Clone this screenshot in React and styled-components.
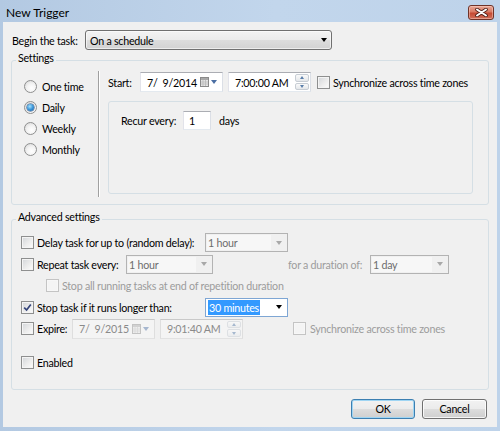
import React from 'react';
import styled, { createGlobalStyle, css } from 'styled-components';

const GlobalStyle = createGlobalStyle`
  html, body {
    margin: 0;
    padding: 0;
    background: #c4d8ee;
  }
  body {
    font-family: Lato, 'Noto Sans', sans-serif;
    font-size: 10.7px;
    letter-spacing: -0.25px;
    color: #000;
  }
  * {
    box-sizing: border-box;
  }
`;

const Window = styled.div`
  display: flex;
  flex-direction: column;
  width: 500px;
  height: 431px;
  background: linear-gradient(to right, #b3c9e2 0%, #c2d6ec 55%, #bed3ea 100%);
`;

const TitleBar = styled.div`
  display: flex;
  justify-content: space-between;
  align-items: flex-start;
  height: 22px;
  padding: 0 6px 0 6px;
`;

const Title = styled.div`
  padding-top: 5px;
  font-size: 12px;
  letter-spacing: 0;
  line-height: 16px;
`;

const CloseButton = styled.div`
  display: flex;
  align-items: center;
  justify-content: center;
  width: 26px;
  height: 15px;
  margin-top: 5px;
  border: 1px solid #6f3328;
  border-radius: 3px;
  background: linear-gradient(#e9a897 0%, #d87a64 45%, #c54a33 55%, #d0705a 100%);
  box-shadow: inset 0 0 0 1px rgba(255, 220, 210, 0.45);
`;

const Client = styled.div`
  display: flex;
  flex: 1;
  flex-direction: column;
  margin: 0 3px 4px;
  padding: 8px 8px 0;
  background: #f0f0f0;
`;

const BeginRow = styled.div`
  display: flex;
  align-items: center;
  height: 20px;
  padding-left: 1px;
`;

const Label = styled.span`
  flex: none;
  width: ${p => (p.$w ? `${p.$w}px` : 'auto')};
  margin-left: ${p => p.$left || 0}px;
  color: ${p => (p.$disabled ? '#9c9c9c' : '#000')};
  white-space: nowrap;
`;

const Group = styled.fieldset`
  min-width: 0;
  margin: ${p => p.$top}px 0 0;
  padding: 0;
  border: 1px solid #d5dfe5;
  border-radius: 3px;
`;

const Legend = styled.legend`
  margin-left: 4px;
  padding: 0 2px 4px;
  line-height: 14px;
`;

const SettingsBody = styled.div`
  display: flex;
  padding: 2px 0 7px;
`;

const Schedules = styled.div`
  display: flex;
  flex: none;
  flex-direction: column;
  width: 86px;
  padding: 5px 0 0 12px;
`;

const Separator = styled.div`
  flex: none;
  width: 2px;
  border-left: 1px solid #a0a0a0;
  border-right: 1px solid #fff;
`;

const ScheduleDetail = styled.div`
  display: flex;
  flex: 1;
  flex-direction: column;
  min-width: 0;
  height: 126px;
  padding: 1px 15px 3px 8px;
`;

const Row = styled.div`
  display: flex;
  align-items: center;
  flex: none;
  height: ${p => p.$h || 20}px;
  margin-top: ${p => p.$top || 0}px;
  padding-left: ${p => p.$indent || 0}px;
`;

const RecurPanel = styled.div`
  height: 93px;
  margin-top: 9px;
  padding: 9px 12px;
  border: 1px solid #d5dfe5;
  border-radius: 3px;
`;

const AdvancedBody = styled.div`
  display: flex;
  flex-direction: column;
  padding: 4px 0 15px 9px;
`;

const RadioCircle = styled.span`
  display: flex;
  align-items: center;
  justify-content: center;
  flex: none;
  width: 13px;
  height: 13px;
  margin-right: 5px;
  border: 1px solid #8e8f8f;
  border-radius: 50%;
  background: radial-gradient(circle at 60% 65%, #fff 0%, #f3f3f3 45%, #d3d3d3 100%);

  &::after {
    content: '';
    display: ${p => (p.$checked ? 'block' : 'none')};
    width: 7px;
    height: 7px;
    border-radius: 50%;
    background: radial-gradient(circle at 40% 35%, #a6e3ff 0%, #3b95d8 50%, #195a9c 100%);
    box-shadow: 0 0 0 0.5px #274c7a;
  }
`;

const Box = styled.span`
  display: flex;
  align-items: center;
  justify-content: center;
  flex: none;
  width: 13px;
  height: 13px;
  margin-right: ${p => p.$gap || 3}px;
  border: 1px solid ${p => (p.$disabled ? '#c4c4c4' : '#8e8f8f')};
  background: ${p =>
    p.$disabled
      ? '#f4f4f4'
      : 'linear-gradient(135deg, #d2d5d9 0%, #ececec 55%, #fdfdfd 100%)'};
  box-shadow: inset 0 0 0 1px ${p => (p.$disabled ? '#f7f7f7' : '#f4f4f4')};
`;

const controlBox = css`
  display: flex;
  align-items: center;
  flex: none;
  width: ${p => p.$w}px;
  height: ${p => p.$h || 19}px;
  margin-left: ${p => p.$left || 0}px;
`;

const DropButton = styled.div`
  ${controlBox};
  justify-content: space-between;
  padding: 0 4px 0 4px;
  border: 1px solid #707070;
  border-radius: 3px;
  background: linear-gradient(#f3f3f3 0%, #ebebeb 50%, #dddddd 51%, #d2d2d2 100%);
  box-shadow: inset 0 0 0 1px rgba(255, 255, 255, 0.6);
`;

const Combo = styled.div`
  ${controlBox};
  padding: 1px;
  border: 1px solid ${p => (p.$focus ? '#7ea6d4' : '#b3b3b3')};
  background: ${p => (p.$focus ? '#fff' : '#f0f0f0')};
`;

const ComboText = styled.span`
  display: flex;
  align-items: center;
  flex: 1;
  height: 100%;
  padding-left: 1px;
  color: ${p => (p.$focus ? '#000' : '#6d6d6d')};
  background: ${p => (p.$focus ? '#fff' : '#f7f7f7')};
  white-space: nowrap;
`;

const Selected = styled.span`
  padding: 0 1px;
  line-height: 15px;
  color: #fff;
  background: #3399ff;
`;

const ArrowCell = styled.span`
  display: flex;
  align-items: center;
  justify-content: center;
  width: 15px;
  height: 100%;
`;

const Arrow = styled.span`
  width: 0;
  height: 0;
  border-left: 3.5px solid transparent;
  border-right: 3.5px solid transparent;
  border-top: 4px solid ${p => p.$color || '#000'};
`;

const Field = styled.div`
  ${controlBox};
  justify-content: space-between;
  padding: 0 1px 0 6px;
  border: 1px solid;
  border-color: ${p =>
    p.$disabled ? '#c9c9c9 #dedede #e2e2e2 #dedede' : '#abadb3 #dbdfe6 #e3e9ef #e2e3ea'};
  background: ${p => (p.$disabled ? '#f4f4f4' : '#fff')};
  color: ${p => (p.$disabled ? '#8a8a8a' : '#000')};
  white-space: pre;
`;

const PickerIcons = styled.span`
  display: flex;
  align-items: center;
  gap: 2px;
  padding-right: 4px;
  opacity: ${p => (p.$disabled ? 0.45 : 1)};
`;

const Spin = styled.span`
  display: flex;
  flex-direction: column;
  gap: 1px;
  width: 14px;
  height: 100%;
  padding: 1px 0;
  opacity: ${p => (p.$disabled ? 0.5 : 1)};
`;

const SpinHalf = styled.span`
  display: flex;
  align-items: center;
  justify-content: center;
  flex: 1;
  border: 1px solid #c7cdd4;
  border-radius: 2px;
  background: linear-gradient(#fafafa, #e4e7ea);
`;

const SpinArrow = styled.span`
  width: 0;
  height: 0;
  border-left: 2.5px solid transparent;
  border-right: 2.5px solid transparent;
  ${p => (p.$up ? 'border-bottom' : 'border-top')}: 3px solid #5a7eaa;
`;

const NumberInput = styled.div`
  display: flex;
  align-items: center;
  flex: none;
  width: 28px;
  height: 19px;
  margin-right: 8px;
  padding-left: 5px;
  border: 1px solid;
  border-color: #abadb3 #dbdfe6 #e3e9ef #e2e3ea;
  background: #fff;
`;

const ButtonRow = styled.div`
  display: flex;
  justify-content: flex-end;
  gap: 7px;
  margin-top: 9px;
  padding-right: 2px;
`;

const Button = styled.div`
  display: flex;
  align-items: center;
  justify-content: center;
  width: ${p => p.$w}px;
  height: 20px;
  border: 1px solid ${p => (p.$default ? '#3c7fb1' : '#707070')};
  border-radius: 3px;
  background: linear-gradient(#f2f2f2 0%, #ebebeb 50%, #dddddd 51%, #cfcfcf 100%);
  box-shadow: inset 0 0 0 1px ${p => (p.$default ? '#9fd5f3' : 'rgba(255, 255, 255, 0.8)')};
`;

const CloseGlyph = () => (
  <svg width="13" height="9" viewBox="0 0 13 9">
    <path d="M2 1.5 L11 7.5 M11 1.5 L2 7.5" stroke="#4a1c14" strokeWidth="3.6" strokeLinecap="round" />
    <path d="M2 1.5 L11 7.5 M11 1.5 L2 7.5" stroke="#fff" strokeWidth="2" strokeLinecap="round" />
  </svg>
);

const Calendar = () => (
  <svg width="9" height="10" viewBox="0 0 9 10">
    <rect x="0.5" y="0.5" width="8" height="9" fill="#e6e6e6" stroke="#8a8a8a" />
    <rect x="1" y="1" width="7" height="2" fill="#a8a8a8" />
    <path d="M1 5 H8 M1 7 H8 M3 3 V9 M5.5 3 V9" stroke="#b9b9b9" strokeWidth="0.8" />
  </svg>
);

const Check = ({ checked, disabled, gap }) => (
  <Box $disabled={disabled} $gap={gap}>
    {checked && (
      <svg width="9" height="9" viewBox="0 0 9 9">
        <path d="M1.2 4.6 L3.6 7 L7.8 1.4" fill="none" stroke="#34447a" strokeWidth="1.7" />
      </svg>
    )}
  </Box>
);

const Radio = ({ checked, label }) => (
  <Row $h={21}>
    <RadioCircle $checked={checked} />
    <Label>{label}</Label>
  </Row>
);

const DropDown = ({ w, left, value, focus }) => (
  <Combo $w={w} $left={left} $focus={focus}>
    <ComboText $focus={focus}>{focus ? <Selected>{value}</Selected> : value}</ComboText>
    <ArrowCell>
      <Arrow $color={focus ? '#000' : '#a8a8a8'} />
    </ArrowCell>
  </Combo>
);

const DateField = ({ value, left, disabled }) => (
  <Field $w={83} $h={20} $left={left} $disabled={disabled}>
    {value}
    <PickerIcons $disabled={disabled}>
      <Calendar />
      <Arrow $color="#4a6ea3" />
    </PickerIcons>
  </Field>
);

const TimeField = ({ value, left, disabled }) => (
  <Field $w={83} $h={20} $left={left} $disabled={disabled}>
    {value}
    <Spin $disabled={disabled}>
      <SpinHalf>
        <SpinArrow $up />
      </SpinHalf>
      <SpinHalf>
        <SpinArrow />
      </SpinHalf>
    </Spin>
  </Field>
);

const App = () => (
  <Window>
    <GlobalStyle />
    <TitleBar>
      <Title>New Trigger</Title>
      <CloseButton>
        <CloseGlyph />
      </CloseButton>
    </TitleBar>
    <Client>
      <BeginRow>
        <Label $w={73}>Begin the task:</Label>
        <DropButton $w={247} $h={20}>
          On a schedule
          <Arrow />
        </DropButton>
      </BeginRow>

      <Group $top={1}>
        <Legend>Settings</Legend>
        <SettingsBody>
          <Schedules>
            <Radio label="One time" />
            <Radio label="Daily" checked />
            <Radio label="Weekly" />
            <Radio label="Monthly" />
          </Schedules>
          <Separator />
          <ScheduleDetail>
            <Row>
              <Label $w={32}>Start:</Label>
              <DateField value="7/  9/2014" />
              <TimeField value="7:00:00 AM" left={5} />
              <Row $indent={6}>
                <Check />
                <Label>Synchronize across time zones</Label>
              </Row>
            </Row>
            <RecurPanel>
              <Row $h={19}>
                <Label $w={62}>Recur every:</Label>
                <NumberInput>1</NumberInput>
                <Label>days</Label>
              </Row>
            </RecurPanel>
          </ScheduleDetail>
        </SettingsBody>
      </Group>

      <Group $top={5}>
        <Legend>Advanced settings</Legend>
        <AdvancedBody>
          <Row $h={21.5}>
            <Check />
            <Label $w={168}>Delay task for up to (random delay):</Label>
            <DropDown w={83} value="1 hour" />
          </Row>
          <Row $h={21.5}>
            <Check />
            <Label $w={89}>Repeat task every:</Label>
            <DropDown w={87} value="1 hour" />
            <Label $w={82} $left={75} $disabled>for a duration of:</Label>
            <DropDown w={79} value="1 day" />
          </Row>
          <Row $h={21.5} $indent={25}>
            <Check disabled />
            <Label $disabled>Stop all running tasks at end of repetition duration</Label>
          </Row>
          <Row $h={21.5}>
            <Check checked />
            <Label $w={168}>Stop task if it runs longer than:</Label>
            <DropDown w={83} value="30 minutes" focus />
          </Row>
          <Row $h={21.5}>
            <Check />
            <Label $w={35}>Expire:</Label>
            <DateField value="7/  9/2015" disabled />
            <TimeField value="9:01:40 AM" left={5} disabled />
            <Row $indent={50}>
              <Check disabled gap={4} />
              <Label $disabled>Synchronize across time zones</Label>
            </Row>
          </Row>
          <Row $h={21.5} $top={12.5}>
            <Check />
            <Label>Enabled</Label>
          </Row>
        </AdvancedBody>
      </Group>

      <ButtonRow>
        <Button $w={64} $default>OK</Button>
        <Button $w={65}>Cancel</Button>
      </ButtonRow>
    </Client>
  </Window>
);

export default App;
